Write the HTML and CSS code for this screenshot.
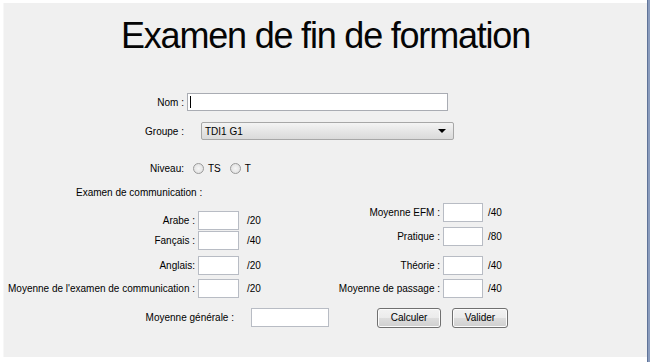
FILE: index.html
```html
<!DOCTYPE html>
<html lang="fr">
<head>
    <meta charset="UTF-8">
    <meta name="viewport" content="width=device-width, initial-scale=1.0">
    <title>Examen de fin de formation</title>
    <link rel="stylesheet" href="styles.css">
</head>
<body>
    <div class="window">
        <div class="panel">
            <h1 class="title">Examen de fin de formation</h1>

            <div class="row row-nom">
                <label class="lbl lbl-main">Nom :</label>
                <div class="field field-nom"><span class="caret"></span></div>
            </div>

            <div class="row row-groupe">
                <label class="lbl lbl-main">Groupe :</label>
                <div class="combo">
                    <span>TDI1 G1</span>
                    <span class="arrow"></span>
                </div>
            </div>

            <div class="row row-niveau">
                <label class="lbl lbl-main">Niveau:</label>
                <span class="radio"></span><span class="radio-text">TS</span>
                <span class="radio"></span><span class="radio-text">T</span>
            </div>

            <p class="section">Examen de communication :</p>

            <div class="columns">
                <div class="col col-left">
                    <div class="row note r-arabe">
                        <label class="lbl">Arabe :</label>
                        <div class="field small"></div>
                        <span class="max">/20</span>
                    </div>
                    <div class="row note r-francais">
                        <label class="lbl">Fançais :</label>
                        <div class="field small"></div>
                        <span class="max">/40</span>
                    </div>
                    <div class="row note r-anglais">
                        <label class="lbl">Anglais:</label>
                        <div class="field small"></div>
                        <span class="max">/20</span>
                    </div>
                    <div class="row note r-moycom">
                        <label class="lbl">Moyenne de l'examen de communication :</label>
                        <div class="field small"></div>
                        <span class="max">/20</span>
                    </div>
                </div>

                <div class="col col-right">
                    <div class="row note r-efm">
                        <label class="lbl">Moyenne EFM :</label>
                        <div class="field small"></div>
                        <span class="max">/40</span>
                    </div>
                    <div class="row note r-pratique">
                        <label class="lbl">Pratique :</label>
                        <div class="field small"></div>
                        <span class="max">/80</span>
                    </div>
                    <div class="row note r-theorie">
                        <label class="lbl">Théorie :</label>
                        <div class="field small"></div>
                        <span class="max">/40</span>
                    </div>
                    <div class="row note r-passage">
                        <label class="lbl">Moyenne de passage :</label>
                        <div class="field small"></div>
                        <span class="max">/40</span>
                    </div>
                </div>
            </div>

            <div class="row row-bottom">
                <label class="lbl lbl-gen">Moyenne générale :</label>
                <div class="field field-gen"></div>
                <button class="btn btn-calc">Calculer</button>
                <button class="btn btn-valid">Valider</button>
            </div>
        </div>
        <div class="edge"></div>
    </div>
</body>
</html>
```

FILE: styles.css
```css
body {
    margin: 0;
    background-color: #ffffff;
    font-family: "Liberation Sans", Arial, sans-serif;
    font-size: 10px;
    color: #000;
}
.window {
    display: flex;
    height: 362px;
}
.panel {
    margin: 3px 0 0 3px;
    width: 644px;
    height: 354px;
    background-color: #f0f0f0;
    border-left: 1px solid #f7f7f7;
    box-sizing: border-box;
}
.edge {
    width: 3px;
    height: 362px;
    background-color: #8a9cbd;
    border-left: 1px solid #5f7398;
    box-sizing: border-box;
}
.title {
    margin: 13px 0 0;
    text-align: center;
    font-weight: normal;
    font-size: 36px;
    line-height: 40px;
    letter-spacing: -1.2px;
    color: #050505;
}
.row {
    display: flex;
    align-items: center;
}
.lbl {
    text-align: right;
    white-space: nowrap;
}
.lbl-main {
    width: 180px;
}
.field {
    background-color: #fff;
    border: 1px solid #b8bcc4;
    box-sizing: border-box;
}
.row-nom {
    margin-top: 37px;
    height: 18px;
}
.field-nom {
    margin-left: 3px;
    width: 261px;
    height: 18px;
    border-color: #a9acb3;
    padding: 2px 0 0 2px;
}
.caret {
    display: block;
    width: 1px;
    height: 12px;
    background-color: #000;
}
.row-groupe {
    margin-top: 11px;
    height: 18px;
}
.combo {
    margin-left: 17px;
    width: 253px;
    height: 18px;
    box-sizing: border-box;
    border: 1px solid #a7a7a7;
    border-radius: 2px;
    background: linear-gradient(#f4f4f4, #e6e6e6 50%, #dadada);
    display: flex;
    align-items: center;
    justify-content: space-between;
    padding: 0 7px 0 3px;
}
.arrow {
    width: 0;
    height: 0;
    border-left: 4px solid transparent;
    border-right: 4px solid transparent;
    border-top: 4px solid #000;
}
.row-niveau {
    margin-top: 21px;
    height: 14px;
}
.radio {
    margin-left: 9px;
    width: 11px;
    height: 11px;
    box-sizing: border-box;
    border: 1px solid #9a9a9a;
    border-radius: 50%;
    background: radial-gradient(#f6f6f6, #dcdcdc);
}
.radio-text {
    margin-left: 4px;
}
.section {
    margin: 11px 0 0 72px;
    line-height: 14px;
}
.columns {
    display: flex;
}
.col-left {
    width: 264px;
    padding-top: 11px;
}
.col-right {
    padding-top: 3px;
}
.note {
    height: 18px;
}
.col-left .lbl {
    width: 191px;
}
.col-right .lbl {
    width: 172px;
}
.field.small {
    margin-left: 3px;
    width: 41px;
    height: 19px;
}
.col-right .field.small {
    width: 40px;
}
.max {
    margin-left: 8px;
}
.col-right .max {
    margin-left: 5px;
}
.r-francais { margin-top: 2px; }
.r-anglais { margin-top: 7px; }
.r-moycom { margin-top: 5px; }
.r-pratique { margin-top: 6px; }
.r-theorie { margin-top: 11px; }
.r-passage { margin-top: 5px; }
.row-bottom {
    margin-top: 11px;
    height: 19px;
}
.lbl-gen {
    width: 230px;
}
.field-gen {
    margin-left: 17px;
    width: 78px;
    height: 19px;
}
.btn {
    height: 20px;
    padding: 0;
    font-family: "Liberation Sans", Arial, sans-serif;
    font-size: 10px;
    color: #000;
    border: 1px solid #707070;
    border-radius: 3px;
    background: linear-gradient(#f2f2f2, #ebebeb 50%, #dddddd 51%, #cfcfcf);
    box-shadow: inset 0 0 0 1px #fcfcfc;
}
.btn-calc {
    margin-left: 48px;
    width: 64px;
}
.btn-valid {
    margin-left: 11px;
    width: 56px;
}
```
